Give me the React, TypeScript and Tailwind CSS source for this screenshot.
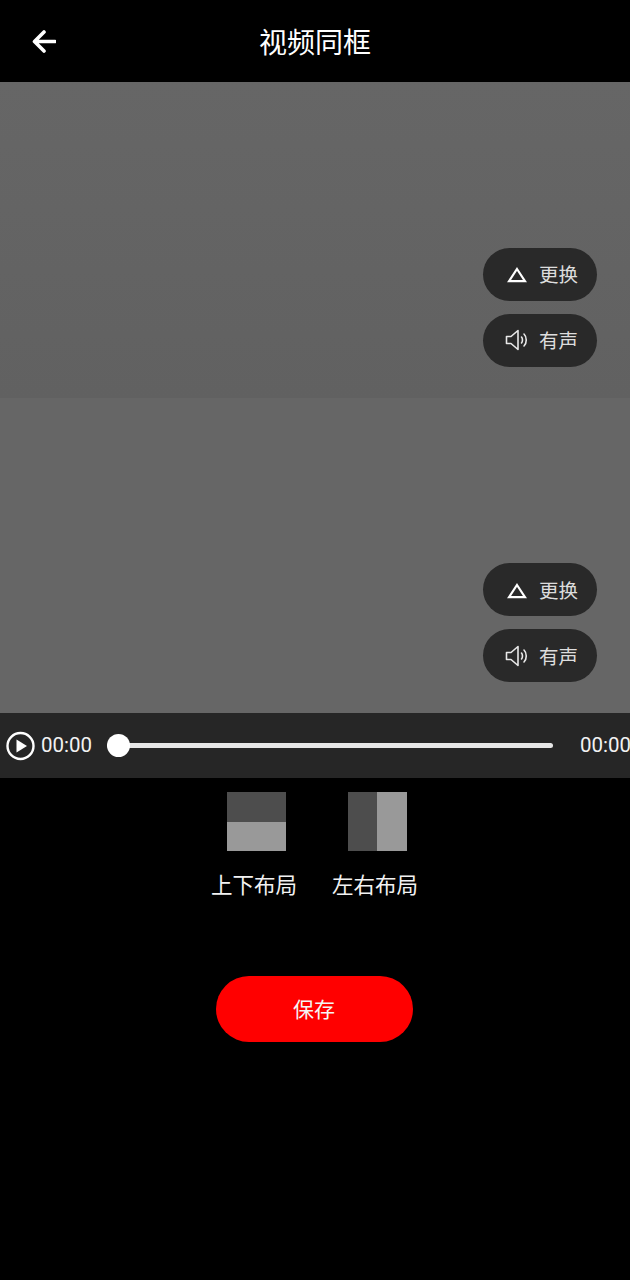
const FONT = "font-['Roboto','Noto_Sans_CJK_SC',sans-serif]";

function TriangleIcon() {
  return (
    <svg className="mt-[2px]" width="20" height="16" viewBox="0 0 20 16" fill="none">
      <path d="M10 2 L18 14.2 H2 Z" stroke="#fff" strokeWidth="2.2" strokeLinejoin="miter" />
    </svg>
  );
}

function SpeakerIcon() {
  return (
    <svg width="24" height="22" viewBox="0 0 24 22" fill="none" stroke="#e8e8e8" strokeWidth="1.6">
      <path d="M1.5 7.5 H6 L13 1.5 V20.5 L6 14.5 H1.5 Z" strokeLinejoin="round" />
      <path d="M16.5 8 C17.8 9.5 17.8 12.5 16.5 14" strokeLinecap="round" />
      <path d="M19 5 C22 8 22 14 19 17" strokeLinecap="round" />
    </svg>
  );
}

function VideoPanel({ shaded }: { shaded?: boolean }) {
  return (
    <div
      className={`flex h-[315.5px] flex-col items-end justify-end gap-[13px] pb-[31px] pr-[33px] ${
        shaded ? "bg-linear-to-b from-[#666666] to-[#616161]" : "bg-[#666666]"
      }`}
    >
      <button className="flex h-[53px] w-[114px] items-center rounded-full bg-[#292929] pl-[24px]">
        <TriangleIcon />
        <span className="ml-[12px] pt-[4px] text-[19.5px] leading-none text-[#dddddd]">更换</span>
      </button>
      <button className="flex h-[53px] w-[114px] items-center rounded-full bg-[#292929] pl-[22px]">
        <SpeakerIcon />
        <span className="ml-[10px] pt-[4px] text-[19.5px] leading-none text-[#dddddd]">有声</span>
      </button>
    </div>
  );
}

function LayoutOption({ label, vertical }: { label: string; vertical: boolean }) {
  return (
    <div className="flex w-[87px] flex-col items-center">
      <div className={`flex h-[59px] w-[59px] ${vertical ? "flex-col" : "flex-row"}`}>
        <div className="flex-1 bg-[#4d4d4d]" />
        <div className="flex-1 bg-[#999999]" />
      </div>
      <span className="mr-[4px] mt-[20px] text-[21.5px] leading-[30px] whitespace-nowrap text-[#f2f2f2]">{label}</span>
    </div>
  );
}

export default function App() {
  return (
    <div className={`${FONT} h-[1280px] w-[630px] overflow-hidden bg-black text-white`}>
      <header className="relative flex h-[82px] items-center justify-center">
        <svg className="absolute left-[32px] top-[30px]" width="24" height="23" viewBox="0 0 24 23" fill="none">
          <path d="M23 11.5 H3 M12 2 L2.5 11.5 L12 21" stroke="#fff" strokeWidth="3.6" strokeLinejoin="round" strokeLinecap="round" />
        </svg>
        <h1 className="pt-[5px] text-[28px] font-normal leading-none">视频同框</h1>
      </header>

      <VideoPanel shaded />
      <VideoPanel />

      <div className="flex h-[65px] items-center bg-[#262626]">
        <svg className="ml-[6px] shrink-0" width="29" height="30" viewBox="0 0 29 30" fill="none">
          <circle cx="14.5" cy="15" r="13" stroke="#fff" strokeWidth="2.4" />
          <path d="M10.5 8.5 L21 15 L10.5 21.5 Z" fill="#fff" />
        </svg>
        <span className="ml-[6px] w-[66px] shrink-0 text-[20.5px] leading-none text-[#f2f2f2]">00:00</span>
        <div className="relative flex h-[5px] w-[446px] shrink-0 rounded-full bg-[#e6e6e6]">
          <div className="absolute left-0 top-[-9px] h-[23px] w-[23px] rounded-full bg-white" />
        </div>
        <span className="ml-[27px] shrink-0 text-[20.5px] leading-none text-[#f2f2f2]">00:00</span>
      </div>

      <div className="mt-[14px] flex justify-center gap-[34px] pl-[3px]">
        <LayoutOption label="上下布局" vertical />
        <LayoutOption label="左右布局" vertical={false} />
      </div>

      <div className="mt-[75px] flex justify-center pr-[2px]">
        <button className="h-[66px] w-[197px] rounded-full bg-[#ff0000] pt-[3px] text-[21px] text-[#f5f5f5]">保存</button>
      </div>
    </div>
  );
}
